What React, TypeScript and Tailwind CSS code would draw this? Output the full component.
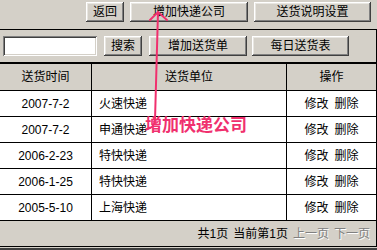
import React from "react"

const rows = [
  { date: "2007-7-2", name: "火速快递" },
  { date: "2007-7-2", name: "申通快递" },
  { date: "2006-2-23", name: "特快快递" },
  { date: "2006-1-25", name: "特快快递" },
  { date: "2005-5-10", name: "上海快递" },
]

function WinButton({ label, w }: { label: string; w: string }) {
  return (
    <button
      className={`${w} h-[20px] bg-[#d4d0c8] text-black text-[12px] leading-none flex items-center justify-center shadow-[inset_-1px_-1px_#404040,inset_1px_1px_#ffffff,inset_-2px_-2px_#808080,inset_2px_2px_#e8e6e1]`}
    >
      {label}
    </button>
  )
}

export default function App() {
  return (
    <div className="relative w-[377px] h-[250px] overflow-hidden bg-[#d4d0c8] text-black text-[12px] font-['Liberation_Sans','Noto_Sans_CJK_SC',sans-serif]">
      {/* 顶部按钮 */}
      <div className="h-[29px] flex justify-end items-start pt-[2px] pr-[6px] gap-[6px]">
        <WinButton label="返回" w="w-[38px]" />
        <WinButton label="增加快递公司" w="w-[118px]" />
        <WinButton label="送货说明设置" w="w-[117px]" />
      </div>

      <div className="border-t border-r border-b border-black">
        {/* 搜索行 */}
        <div className="h-[32px] flex items-center pl-[3px]">
          <input className="w-[94px] h-[20px] bg-white mr-[7px] outline-none shadow-[inset_1px_1px_#808080,inset_-1px_-1px_#ffffff,inset_2px_2px_#404040,inset_-2px_-2px_#d4d0c8]" />
          <WinButton label="搜索" w="w-[38px]" />
          <div className="w-[7px]" />
          <WinButton label="增加送货单" w="w-[98px]" />
          <div className="w-[5px]" />
          <WinButton label="每日送货表" w="w-[97px]" />
        </div>

        {/* 表格 */}
        <div className="border-t-2 border-black">
          <div className="flex h-[27px] border-b border-black bg-[#d4d0c8]">
            <div className="w-[92px] border-r border-black flex items-center justify-center">送货时间</div>
            <div className="w-[195px] border-r border-black flex items-center justify-center">送货单位</div>
            <div className="flex-1 flex items-center justify-center">操作</div>
          </div>
          {rows.map((r, i) => (
            <div key={i} className="flex h-[26px] border-b border-black bg-white">
              <div className="w-[92px] border-r border-black flex items-center justify-center">{r.date}</div>
              <div className="w-[195px] border-r border-black flex items-center pl-[7px]">{r.name}</div>
              <div className="flex-1 flex items-center justify-center gap-[6px]">
                <span>修改</span>
                <span>删除</span>
              </div>
            </div>
          ))}
        </div>

        {/* 分页 */}
        <div className="h-[25px] flex items-center justify-end pr-[6px] gap-[5px]">
          <span>共1页</span>
          <span>当前第1页</span>
          <span className="text-[#808080] [text-shadow:1px_1px_0_#ffffff]">上一页</span>
          <span className="text-[#808080] [text-shadow:1px_1px_0_#ffffff]">下一页</span>
        </div>
      </div>
      <div className="h-[1px] bg-[#d4d0c8]" />
      <div className="h-[3px] bg-[#404040]" />

      {/* 标注 */}
      <svg className="absolute left-0 top-0 pointer-events-none" width="377" height="250">
        <g stroke="#f0306e" strokeWidth="2" fill="none" strokeLinecap="round">
          <path d="M147 129 Q154 128 155 120 L158 12" />
          <path d="M150 20 L158 12 L167 20" />
        </g>
      </svg>
      <div className="absolute left-[145px] top-[115px] text-[17px] leading-none font-bold text-[#f0306e] font-['Noto_Sans_CJK_SC',sans-serif]">
        增加快递公司
      </div>
    </div>
  )
}
